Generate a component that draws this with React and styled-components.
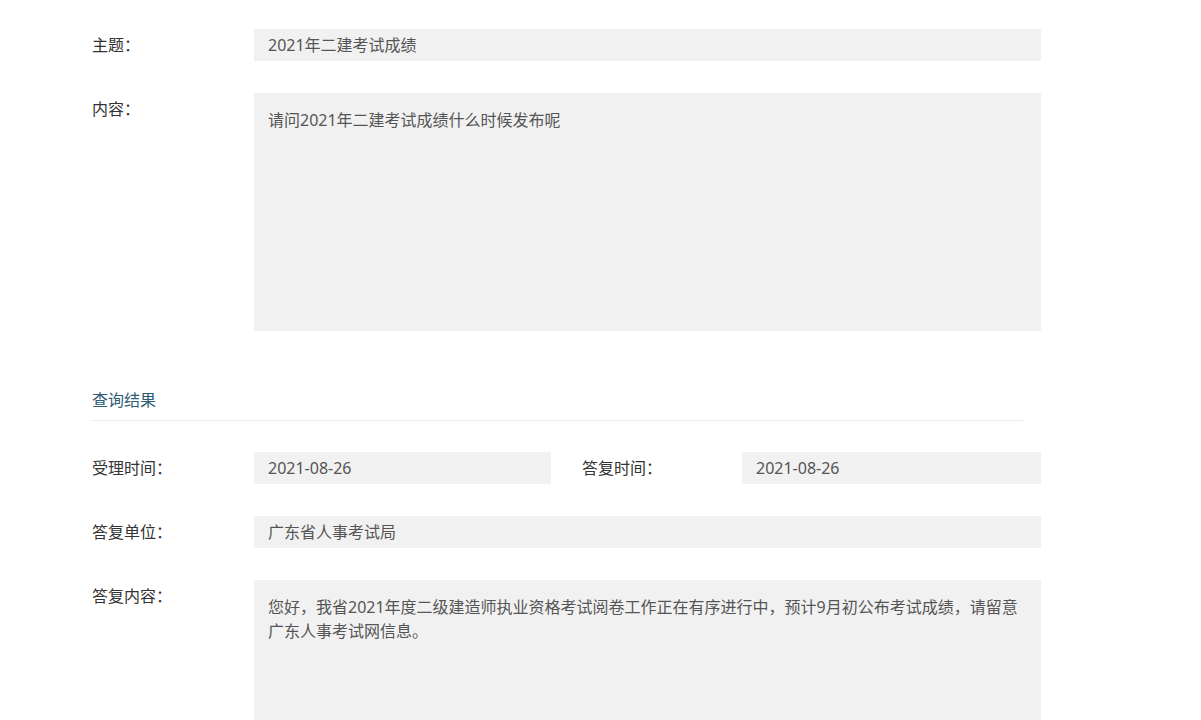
import styled, { createGlobalStyle } from "styled-components";

const GlobalStyle = createGlobalStyle`
    body {
        margin: 0;
        background: #fff;
        font-family: "Noto Sans", "Noto Sans CJK SC", sans-serif;
    }
`

export default function App(){
    return(
        <Page>
            <GlobalStyle />
            <Row>
                <Label>主题：</Label>
                <Field>2021年二建考试成绩</Field>
            </Row>
            <Row>
                <Label>内容：</Label>
                <Area>请问2021年二建考试成绩什么时候发布呢</Area>
            </Row>

            <SectionTitle>查询结果</SectionTitle>

            <Pair>
                <Row $label="162px">
                    <Label>受理时间：</Label>
                    <Field>2021-08-26</Field>
                </Row>
                <Row $label="160px">
                    <Label>答复时间：</Label>
                    <Field>2021-08-26</Field>
                </Row>
            </Pair>
            <Row>
                <Label>答复单位：</Label>
                <Field>广东省人事考试局</Field>
            </Row>
            <Row>
                <Label>答复内容：</Label>
                <Area>您好，我省2021年度二级建造师执业资格考试阅卷工作正在有序进行中，预计9月初公布考试成绩，请留意广东人事考试网信息。</Area>
            </Row>
        </Page>
    )
}

const Page = styled.div`
    width: 949px;
    padding: 29px 0 0 92px;
`

const Row = styled.div`
    display: grid;
    grid-template-columns: ${p => p.$label || "162px"} 1fr;
    margin-bottom: 32px;
`

const Pair = styled.div`
    display: grid;
    grid-template-columns: 459px 1fr;
    column-gap: 31px;
`

const Label = styled.div`
    font-size: 16px;
    line-height: 32px;
    color: #333;
`

const Field = styled.div`
    background: #f1f1f1;
    height: 32px;
    padding: 0 14px;
    font-size: 16px;
    line-height: 32px;
    color: #555;
    box-sizing: border-box;
`

const Area = styled(Field)`
    height: 238px;
    padding: 15px 14px;
    line-height: 24px;
`

const SectionTitle = styled.div`
    width: 931px;
    margin: 59px 0 31px;
    padding-bottom: 10px;
    border-bottom: 1px solid #ebebeb;
    font-size: 16px;
    line-height: 20px;
    color: #2f5b74;
`
